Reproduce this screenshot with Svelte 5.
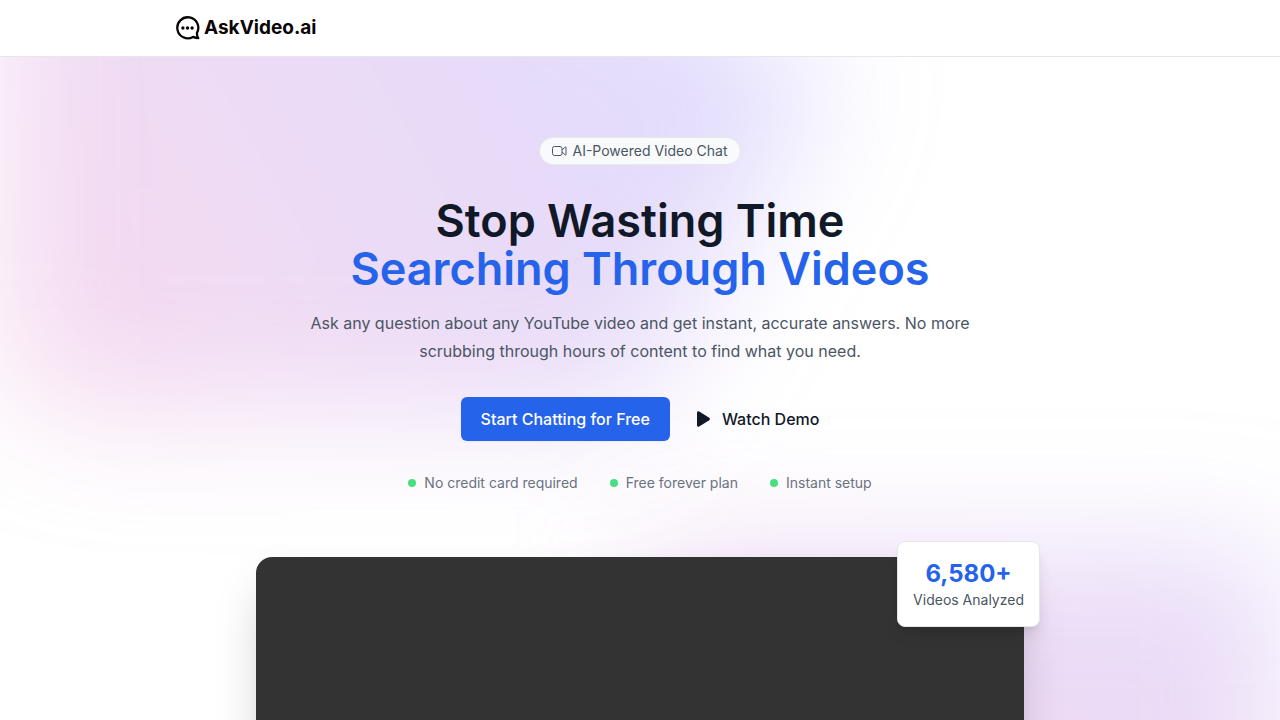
<script lang="ts">
	const perks = ['No credit card required', 'Free forever plan', 'Instant setup'];

	const stat = { value: '6,580+', label: 'Videos Analyzed' };
</script>

<header class="navbar">
	<div class="navbar-inner">
		<a class="logo" href="/">
			<svg width="24" height="24" viewBox="0 0 24 24" fill="none" aria-hidden="true">
				<path
					d="M20.900 17A10.500 10.500 0 1 0 17 20.900c1.800.8 3.300 1.200 5.300 1.300-1-1.400-1.400-3.200-1.400-5.200Z"
					stroke="currentColor"
					stroke-width="2.3"
					stroke-linejoin="round"
				/>
				<circle cx="6.900" cy="12" r="1.7" fill="currentColor" />
				<circle cx="11.500" cy="12" r="1.7" fill="currentColor" />
				<circle cx="16.100" cy="12" r="1.7" fill="currentColor" />
			</svg>
			<span>AskVideo.ai</span>
		</a>
	</div>
</header>

<main class="hero">
	<div class="glow glow-top" aria-hidden="true"><div></div></div>
	<div class="glow glow-bottom" aria-hidden="true"><div></div></div>

	<div class="content">
		<div class="badge">
			<svg width="16" height="16" viewBox="0 0 16 16" fill="none" stroke="currentColor" aria-hidden="true">
				<rect x="0.5" y="3.500" width="9.500" height="9" rx="2" />
				<path d="M10 7l3.300-3a.4.4 0 0 1 .7.3v7.400a.4.4 0 0 1-.7.3L10 9" stroke-linejoin="round" />
			</svg>
			AI-Powered Video Chat
		</div>

		<h1>Stop Wasting Time <span>Searching Through Videos</span></h1>

		<p class="lead">
			Ask any question about any YouTube video and get instant, accurate answers. No more scrubbing
			through hours of content to find what you need.
		</p>

		<div class="actions">
			<button class="btn-primary">Start Chatting for Free</button>
			<button class="btn-ghost">
				<svg width="20" height="20" viewBox="0 0 20 20" fill="currentColor" aria-hidden="true">
					<path d="M3 3.800v12.400c0 1.200 1.200 1.900 2.200 1.300l10-6.200c.9-.6.9-2 0-2.600l-10-6.200C4.200 1.900 3 2.600 3 3.800Z" />
				</svg>
				Watch Demo
			</button>
		</div>

		<ul class="perks">
			{#each perks as perk}
				<li>{perk}</li>
			{/each}
		</ul>

		<div class="preview">
			<div class="video"></div>
			<div class="stat-card">
				<strong>{stat.value}</strong>
				<span>{stat.label}</span>
			</div>
		</div>
	</div>
</main>

<style>
	:global(body) {
		background: #fff;
		font-family: Inter, 'Liberation Sans', sans-serif;
		color: #111827;
	}

	.navbar {
		position: relative;
		z-index: 1;
		background: #fff;
		border-bottom: 1px solid #e5e7eb;
	}

	.navbar-inner {
		display: flex;
		align-items: center;
		max-width: 928px;
		height: 56px;
		margin: 0 auto;
		padding: 0 16px;
	}

	.logo {
		display: flex;
		align-items: center;
		gap: 4px;
		color: #0a0506;
		font-size: 19px;
		font-weight: 700;
		line-height: 28px;
		text-decoration: none;
	}

	.hero {
		position: relative;
		isolation: isolate;
		overflow: hidden;
		padding: 80px 16px 96px;
	}

	.glow {
		position: absolute;
		left: 0;
		right: 0;
		z-index: -1;
		overflow: hidden;
		filter: blur(64px);
		pointer-events: none;

		div {
			position: relative;
			width: 1155px;
			aspect-ratio: 1155 / 678;
			background: linear-gradient(to top right, #ff80b5, #9089fc);
			opacity: 0.3;
		}
	}

	.glow-top {
		top: -320px;

		div {
			left: calc(50% - 480px);
			transform: translateX(-50%) rotate(30deg);
		}
	}

	.glow-bottom {
		top: 492px;

		div {
			left: calc(50% + 576px);
			transform: translateX(-50%);
		}
	}

	.content {
		display: flex;
		flex-direction: column;
		align-items: center;
		max-width: 768px;
		margin: 0 auto;
		text-align: center;
	}

	.badge {
		display: flex;
		align-items: center;
		gap: 4px;
		padding: 3px 12px;
		border: 1px solid #e5e7eb;
		border-radius: 14px;
		background: #f9fafb;
		color: #4b5563;
		font-size: 14px;
		line-height: 20px;
	}

	h1 {
		margin: 32px 0 16px;
		font-size: 45px;
		font-weight: 600;
		line-height: 48px;

		span {
			display: block;
			color: #2563eb;
		}
	}

	.lead {
		max-width: 672px;
		margin: 0 0 32px;
		color: #4b5563;
		font-size: 16px;
		line-height: 28px;
	}

	.actions {
		display: flex;
		align-items: center;
		gap: 24px;
		margin-bottom: 32px;

		button {
			border: none;
			font-family: inherit;
			font-size: 16px;
			font-weight: 500;
			line-height: 24px;
			cursor: pointer;
		}
	}

	.btn-primary {
		padding: 10px 20px;
		border-radius: 6px;
		background: #2563eb;
		color: #fff;
		box-shadow: 0 1px 2px rgba(0, 0, 0, 0.05);

		&:hover {
			background: #1d4ed8;
		}
	}

	.btn-ghost {
		display: flex;
		align-items: center;
		gap: 8px;
		padding: 10px 0;
		background: none;
		color: #111827;
	}

	.perks {
		display: flex;
		gap: 32px;
		margin: 0 0 64px;
		padding: 0;
		list-style: none;
		color: #6b7280;
		font-size: 14px;
		line-height: 20px;

		li {
			display: flex;
			align-items: center;
			gap: 8px;
		}

		li::before {
			content: '';
			width: 8px;
			height: 8px;
			border-radius: 50%;
			background: #4ade80;
		}
	}

	.preview {
		position: relative;
		width: 100%;
	}

	.video {
		aspect-ratio: 16 / 9;
		border-radius: 16px;
		background: #333;
		box-shadow: 0 25px 50px -12px rgba(0, 0, 0, 0.25);
	}

	.stat-card {
		position: absolute;
		top: -16px;
		right: -16px;
		display: flex;
		flex-direction: column;
		padding: 16px 15px;
		border: 1px solid #e5e7eb;
		border-radius: 8px;
		background: #fff;
		box-shadow:
			0 10px 15px -3px rgba(0, 0, 0, 0.1),
			0 4px 6px -4px rgba(0, 0, 0, 0.1);

		strong {
			color: #2563eb;
			font-size: 24px;
			font-weight: 700;
			line-height: 32px;
		}

		span {
			color: #4b5563;
			font-size: 14px;
			line-height: 20px;
		}
	}
</style>
